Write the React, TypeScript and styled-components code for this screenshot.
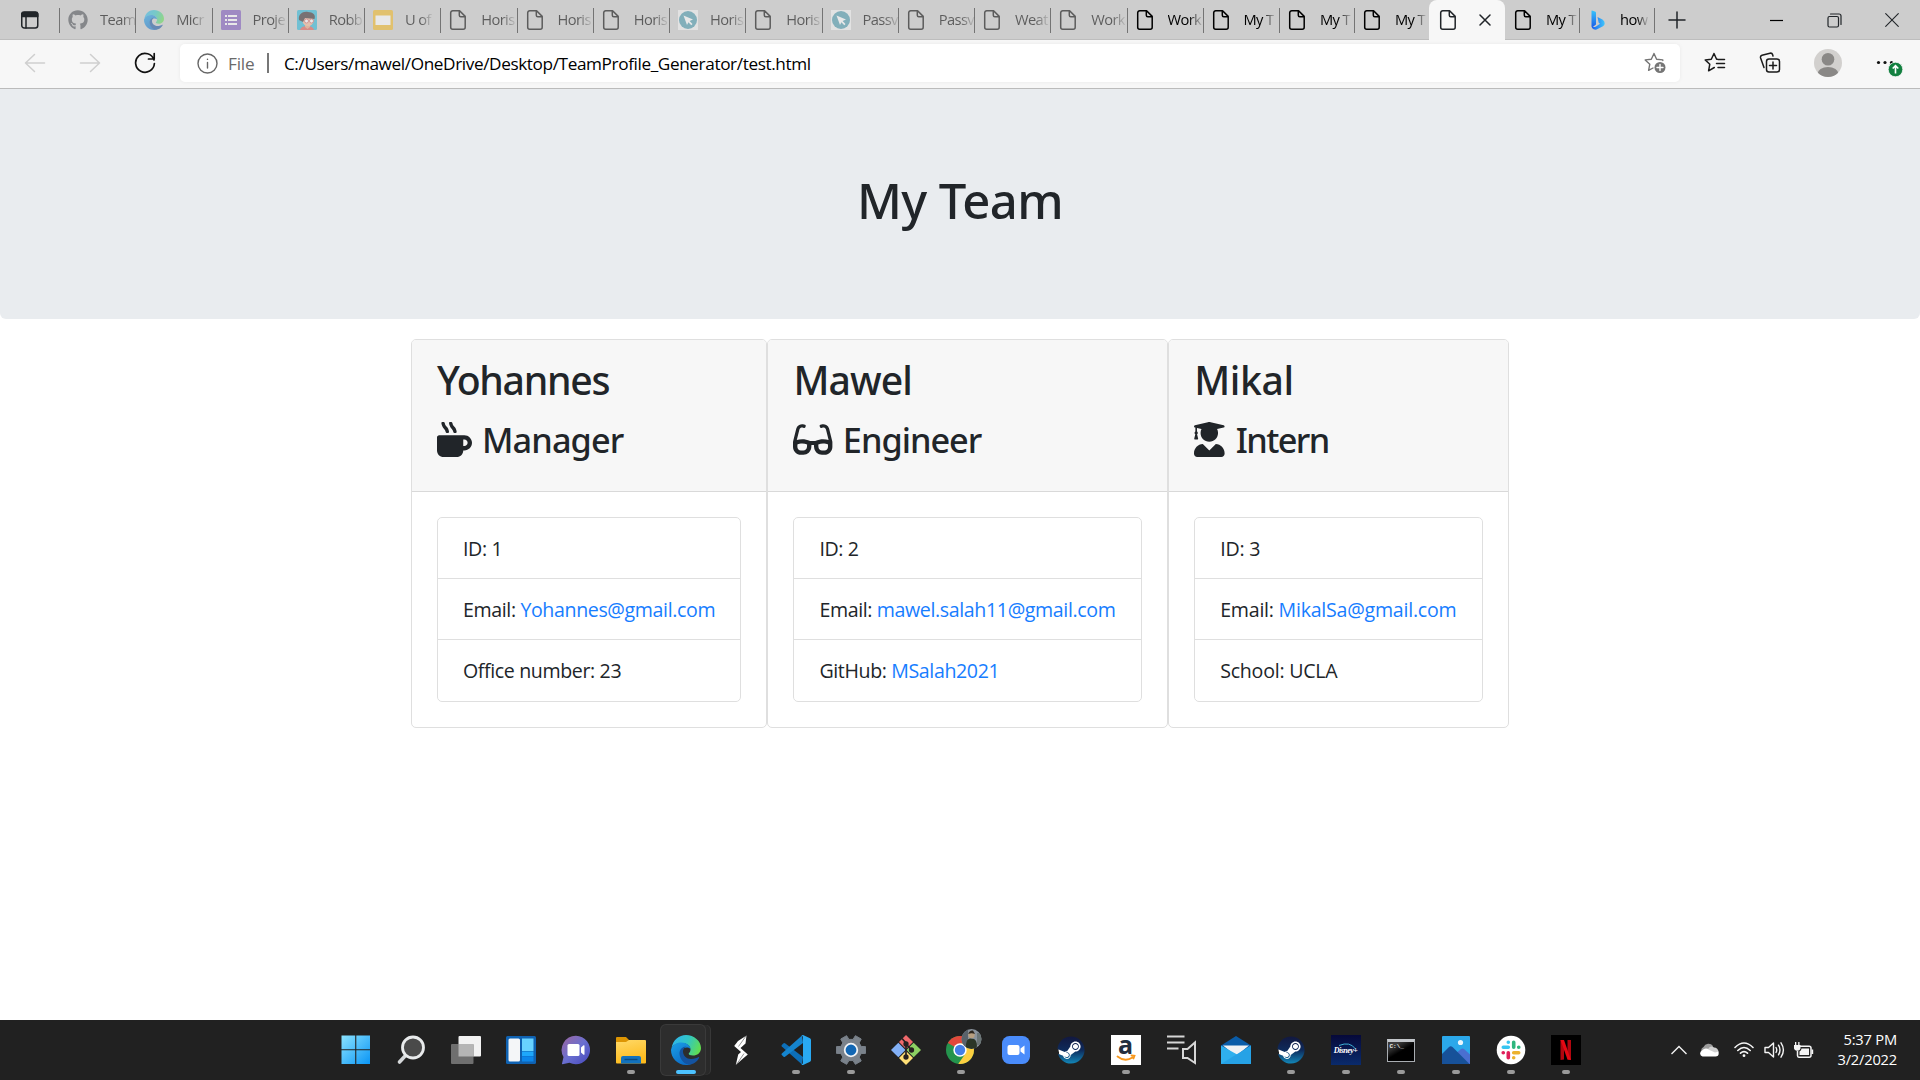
import React from "react";
import styled, { createGlobalStyle, css } from "styled-components";
import { FaGithub, FaMugHot, FaGlasses, FaUserGraduate, FaSteam } from "react-icons/fa";

const GlobalStyle = createGlobalStyle`
  * { box-sizing: border-box; }
  body {
    margin: 0;
    background: #fff;
    color: #212529;
    font-family: "Open Sans", "Noto Sans", sans-serif;
    overflow: hidden;
  }
  h1, h2, h3, ul { margin: 0; padding: 0; }
  svg { display: block; flex: none; }
`;

const Screen = styled.div`
  width: 1920px;
  height: 1080px;
  display: flex;
  flex-direction: column;
`;

/* ---------- browser chrome ---------- */

const TabStrip = styled.div`
  height: 40px;
  flex: none;
  display: flex;
  background: #cdcdcd;
  box-shadow: inset 0 -1px 0 #bdbdbd;
`;

const TabMenuButton = styled.div`
  width: 59px;
  flex: none;
  display: flex;
  align-items: center;
  padding-left: 20px;
`;

const TabItem = styled.div<{ $w: number; $asleep?: boolean; $bare?: boolean }>`
  width: ${(p) => p.$w}px;
  flex: none;
  display: flex;
  align-items: center;
  color: #000;
  &::before {
    content: "";
    flex: none;
    width: 1px;
    height: 25px;
    margin-right: 8px;
    background: ${(p) => (p.$bare ? "transparent" : "#747474")};
  }
  > * { opacity: ${(p) => (p.$asleep ? 0.55 : 1)}; }
`;

const TabTitle = styled.span`
  flex: none;
  margin: -2px 0 0 12px;
  padding-right: 1px;
  white-space: nowrap;
  font-size: 14.7px;
  line-height: 22px;
  letter-spacing: -0.6px;
  mask-image: linear-gradient(90deg, #000 60%, rgba(0, 0, 0, 0.15) 98%);
`;

const ActiveTab = styled.div`
  width: 76px;
  flex: none;
  display: flex;
  align-items: center;
  gap: 20px;
  padding-left: 10px;
  background: #f7f7f7;
  border-radius: 8px 8px 0 0;
`;

const EndDivider = styled.div`
  width: 1px;
  height: 25px;
  align-self: center;
  margin-right: 13px;
  background: #747474;
`;

const NewTab = styled.div`
  display: flex;
  align-items: center;
`;

const WindowButtons = styled.div`
  margin-left: auto;
  width: 151px;
  display: flex;
  align-items: center;
  gap: 43px;
`;

const Toolbar = styled.div`
  height: 49px;
  flex: none;
  display: flex;
  align-items: center;
  padding: 0 17px 2px 24px;
  background: #f7f7f7;
  border-bottom: 1px solid #bbb;
`;

const NavButtons = styled.div`
  width: 156px;
  flex: none;
  display: flex;
  align-items: center;
  gap: 33px;
`;

const AddressBar = styled.div`
  width: 1500px;
  height: 38px;
  flex: none;
  display: flex;
  align-items: center;
  padding: 0 13px 0 17px;
  border-radius: 5px;
  background: #fff;
  box-shadow: 0 0 4px rgba(0, 0, 0, 0.06);
  font-size: 17.2px;
  letter-spacing: -0.39px;
  color: #000;
`;

const Scheme = styled.span`
  margin-left: 10px;
  color: #6a6a6a;
  letter-spacing: -0.2px;
`;

const Divider = styled.span`
  width: 1.5px;
  height: 20px;
  margin: 0 15px 0 13px;
  background: #777;
`;

const Address = styled.span`
  flex: 1;
`;

const ToolbarActions = styled.div`
  display: flex;
  align-items: center;
  margin-left: 24px;
`;

const Action = styled.div<{ $gap: number }>`
  margin-right: ${(p) => p.$gap}px;
`;

/* ---------- page ---------- */

const Page = styled.main`
  flex: 1;
  display: flex;
  flex-direction: column;
  align-items: center;
`;

const Jumbotron = styled.header`
  width: 100%;
  height: 230px;
  padding-top: 82px;
  margin-bottom: 20px;
  background: #e9ecef;
  border-radius: 0 0 6px 6px;
  text-align: center;
`;

const headingFont = css<{ $track: number }>`
  font-family: "Noto Sans", "Open Sans", sans-serif;
  font-weight: 500;
  line-height: 1.2;
  letter-spacing: ${(p) => p.$track}px;
`;

const PageTitle = styled.h1<{ $track: number }>`
  ${headingFont}
  font-size: 49px;
`;

const Team = styled.section`
  display: flex;
`;

const Card = styled.article<{ $w: number }>`
  width: ${(p) => p.$w}px;
  height: 389px;
  border: 1px solid #dfdfdf;
  border-radius: 5px;
  overflow: hidden;
`;

const CardHeader = styled.div`
  height: 152px;
  padding: 16px 25px;
  background: #f7f7f7;
  border-bottom: 1px solid #d9d9d9;
`;

const MemberName = styled.h2<{ $track: number }>`
  ${headingFont}
  font-size: 39.2px;
  line-height: 48px;
  margin-bottom: 15px;
`;

const MemberRole = styled.h3<{ $track: number; $gap: number; $iconWidth: number }>`
  ${headingFont}
  display: flex;
  align-items: center;
  gap: ${(p) => p.$gap}px;
  font-size: 34.3px;
  line-height: 42px;
  svg {
    width: ${(p) => p.$iconWidth}px;
    height: 35px;
    margin-top: -2px;
  }
`;

const Facts = styled.ul<{ $track: number }>`
  margin: 25px;
  list-style: none;
  border: 1px solid #dfdfdf;
  border-radius: 5px;
  letter-spacing: ${(p) => p.$track}px;
`;

const Fact = styled.li`
  height: 61px;
  padding: 16px 25px 0;
  font-size: 19.6px;
  line-height: 30px;
  white-space: nowrap;
  &:first-child { height: 60px; }
  &:last-child { height: 62px; }
  & + & { border-top: 1px solid #dfdfdf; }
`;

const Link = styled.a`
  color: #177dff;
`;

/* ---------- taskbar ---------- */

const Taskbar = styled.footer`
  height: 60px;
  flex: none;
  display: flex;
  align-items: center;
  padding-left: 328px;
  background: #212121;
  color: #fff;
`;

const AppSlot = styled.div<{ $state?: "open" | "active" }>`
  width: 55px;
  height: 60px;
  flex: none;
  display: flex;
  flex-direction: column;
  align-items: center;
  justify-content: flex-end;
  &::after {
    content: "";
    flex: none;
    width: ${(p) => (p.$state === "active" ? 20 : 8)}px;
    height: 4px;
    margin: ${(p) => (p.$state === "active" ? -5 : 5)}px 0 6px;
    border-radius: 2px;
    background: ${(p) => (p.$state === "active" ? "#4cc2ff" : p.$state ? "#9a9a9a" : "transparent")};
  }
`;

const IconBox = styled.div`
  display: flex;
  align-items: center;
  justify-content: center;
  width: 30px;
  height: 30px;
`;

const ActiveIconBox = styled(IconBox)`
  width: 44px;
  height: 50px;
  flex: none;
  margin-right: 5px;
  padding-left: 5px;
  border-radius: 5px;
  background: #2d2d2d;
  box-shadow: 0 0 0 1px #3a3a3a, 5px 0 0 0 #292929, 6px 0 0 0 #383838;
`;

const Tray = styled.div`
  margin-left: auto;
  display: flex;
  align-items: center;
`;

const TrayItem = styled.div<{ $gap: number }>`
  margin-right: ${(p) => p.$gap}px;
`;

const Clock = styled.div`
  width: 82px;
  margin-right: 23px;
  margin-left: -1px;
  font-size: 14.7px;
  line-height: 20px;
  letter-spacing: -0.2px;
  text-align: right;
  padding-bottom: 3px;
`;

/* ---------- browser icons ---------- */

const stroke = { fill: "none", stroke: "currentColor", strokeLinecap: "round", strokeLinejoin: "round" } as const;

const PageIcon = () => (
  <svg width="20" height="20" viewBox="0 0 20 20" {...stroke} strokeWidth="1.5">
    <path d="M4.5.8H10.6L16.2 6.4V17.2a2 2 0 0 1-2 2H3.7a2 2 0 0 1-2-2V2.8a2 2 0 0 1 2-2ZM10.3 1V5.2a1.5 1.5 0 0 0 1.5 1.5H16" />
  </svg>
);

const CursorIcon = () => (
  <svg width="20" height="20" viewBox="0 0 20 20">
    <rect width="20" height="20" fill="#f4f4f4" />
    <circle cx="10" cy="10" r="9" fill="#4597ac" />
    <path d="M5.5 5.5 15 9.5 11.6 11 14.5 14 13.3 15.2 10.4 12.2 9 15Z" fill="#fff" />
  </svg>
);

const FormsIcon = () => (
  <svg width="20" height="20" viewBox="0 0 20 20">
    <rect width="20" height="20" rx="1.5" fill="#7b54bb" />
    <g fill="#fff">
      <path d="M7 5h9v2H7zM7 9h9v2H7zM7 13h9v2H7z" />
      <path d="M4 5h2v2H4zM4 9h2v2H4zM4 13h2v2H4z" />
    </g>
  </svg>
);

const SlidesIcon = () => (
  <svg width="20" height="20" viewBox="0 0 20 20">
    <rect width="20" height="20" rx="1.5" fill="#f2b822" />
    <rect x="2.5" y="5.5" width="15" height="9.5" fill="#fff" />
  </svg>
);

const FaceIcon = () => (
  <svg width="20" height="20" viewBox="0 0 20 20">
    <rect width="20" height="20" rx="1.5" fill="#26b6d8" />
    <path d="M3 20q1-4 7-4t7 4Z" fill="#e1574e" />
    <path d="M8 14h5v3l-2.5 2L8 17Z" fill="#e9a37e" />
    <circle cx="11" cy="10.5" r="5.5" fill="#f4b896" />
    <path d="M2 10C1 4 6 1 11 2c5 0 8 3 6.5 7L8 8l-2 4Z" fill="#33292b" />
    <g fill="#fff" stroke="#d05252" strokeWidth=".8">
      <circle cx="9.5" cy="11" r="2" />
      <circle cx="14.5" cy="11" r="2" />
    </g>
  </svg>
);

const BingIcon = () => (
  <svg width="20" height="20" viewBox="0 0 20 20">
    <defs>
      <linearGradient id="bingStem" x2="0" y2="1">
        <stop stopColor="#36c5fb" />
        <stop offset="1" stopColor="#1a5be8" />
      </linearGradient>
      <linearGradient id="bingBowl">
        <stop stopColor="#1b5ff0" />
        <stop offset="1" stopColor="#3fc6fb" />
      </linearGradient>
    </defs>
    <path d="M4 .5 7.5 1.8Q8 2 8 3V14.5L4 17.5 3.5 16V1Q3.5.3 4 .5Z" fill="url(#bingStem)" />
    <path d="M9.5 7 14.5 9.5Q16.7 11 16.7 13.2 16.7 15 15 16.2L8.6 19.6Q6 20.3 4 18L3.7 15.8Q5.5 18 8 16.5L12 13.8 10.7 12.8Z" fill="url(#bingBowl)" />
  </svg>
);

const EdgeIcon = ({ size, id }: { size: number; id: string }) => (
  <svg width={size} height={size} viewBox="0 0 30 30">
    <defs>
      <linearGradient id={`${id}Top`} x1="0" y1=".3" x2="1" y2=".6">
        <stop stopColor="#2fb4ee" />
        <stop offset=".5" stopColor="#31c6c4" />
        <stop offset="1" stopColor="#62de4d" />
      </linearGradient>
      <linearGradient id={`${id}Left`} x2=".6" y2="1">
        <stop stopColor="#1ba0e8" />
        <stop offset="1" stopColor="#0c6cc6" />
      </linearGradient>
    </defs>
    <path d="M.5 13C2 5 8 0 15 0c8 0 15 6 15 13 0 5-4 7.5-8 7.5-3 0-4.5-1-4.3-2 .8-1 1.8-2 1.8-4C19.5 11 16 8 11 8 6 8 2 10 .5 13Z" fill={`url(#${id}Top)`} />
    <path d="M.6 13C2 9.5 6 7.5 10.5 7.5c5 0 9 3 9 6.5C15 10.5 9 14 9.5 20c.5 5 5.5 9.5 10.5 9.2C18.5 29.8 17 30 15 30 6.5 30 0 23 0 15 0 14.2.3 13.5.6 13Z" fill={`url(#${id}Left)`} />
    <path d="M8.5 19C8.2 14.5 11.5 11.5 15.5 11.5c-2.5 1-3.5 3-3.5 5 0 4 3.5 7.5 8 7.5 3.5 0 6-1.2 7.5-2 .6 0 1 .3.5 1-2 4-6 6.5-9.5 6.5-5 0-9.5-5-10-10.5Z" fill="#1453a0" />
  </svg>
);

const TabMenuIcon = () => (
  <svg width="20" height="20" viewBox="0 0 20 20" {...stroke} strokeWidth="1.5">
    <rect x="1.75" y="2.5" width="16" height="15.5" rx="2.5" />
    <path d="M1.75 3.5Q2 2 4 2H15.5Q17.5 2 17.75 3.5V6.5h-16Z" fill="currentColor" />
    <path d="M6 6.5V18" />
  </svg>
);

const ArrowIcon = ({ flip }: { flip?: boolean }) => (
  <svg width="22" height="20" viewBox="0 0 22 20" {...stroke} stroke="#cfcfcf" strokeWidth="1.5">
    <path d={flip ? "M1.5 10H20.5M11.5 1.5 20.5 10 11.5 18.5" : "M20.5 10H1.5M10.5 1.5 1.5 10 10.5 18.5"} />
  </svg>
);

const ReloadIcon = () => (
  <svg width="22" height="22" viewBox="0 0 22 22" {...stroke} stroke="#111" strokeWidth="1.7">
    <path d="M20 8A9.4 9.4 0 1 0 20.4 11.5M20.2 1.5V7H14.5" />
  </svg>
);

const InfoIcon = () => (
  <svg width="21" height="21" viewBox="0 0 21 21" {...stroke} stroke="#666" strokeWidth="1.4">
    <circle cx="10.5" cy="10.5" r="9.5" />
    <path d="M10.5 9.5V15M10.5 6.3V6.4" />
  </svg>
);

const AddFavoriteIcon = () => (
  <svg width="23" height="22" viewBox="0 0 23 22" {...stroke} stroke="#757575" strokeWidth="1.4">
    <path d="M18.8 8.5V7.9L12.6 7.2 10 1.5 7.3 7.2 1.2 7.9 5.8 12.2 4.6 18.3 9 16" />
    <circle cx="16" cy="15.5" r="5.5" fill="#757575" stroke="none" />
    <path d="M16 12.5V18.5M13 15.5H19" stroke="#fff" />
  </svg>
);

const FavoritesIcon = () => (
  <svg width="22" height="22" viewBox="0 0 22 22" {...stroke} stroke="#1b1b1b" strokeWidth="1.5">
    <path d="M13.5 7.2H12.6L10 1.5 7.3 7.2 1.2 7.9 5.8 12.2 4.6 18.8 10.3 15.5M14 7.5H20.5M12.5 11.5H20.5M14 15.5H20.5" />
  </svg>
);

const CollectionsIcon = () => (
  <svg width="22" height="22" viewBox="0 0 22 22" {...stroke} stroke="#1b1b1b" strokeWidth="1.5">
    <rect x="7.5" y="7" width="13" height="13" rx="2.5" />
    <path d="M14 10V17M10.5 13.5H17.5M5 15.5 1.6 6Q1 4 3 3.2L11 1.2Q13 .8 13.6 2.6L14 4" />
  </svg>
);

const ProfileIcon = () => (
  <svg width="28" height="28" viewBox="0 0 28 28">
    <defs>
      <clipPath id="profileClip"><circle cx="14" cy="14" r="14" /></clipPath>
    </defs>
    <g clipPath="url(#profileClip)">
      <rect width="28" height="28" fill="#d2d0ce" />
      <circle cx="14" cy="10.3" r="6.3" fill="#8a8886" />
      <ellipse cx="14" cy="25" rx="10.5" ry="7" fill="#8a8886" />
    </g>
  </svg>
);

const MoreIcon = () => (
  <svg width="27" height="28" viewBox="0 0 27 28">
    <g fill="#111">
      <circle cx="2.5" cy="13.5" r="1.6" />
      <circle cx="9" cy="13.5" r="1.6" />
      <circle cx="15.5" cy="13.5" r="1.6" />
    </g>
    <circle cx="19.5" cy="20.5" r="7.3" fill="#138040" stroke="#f7f7f7" strokeWidth=".8" />
    <path d="M19.5 24.5V17M16.7 19.5 19.5 16.7 22.3 19.5" fill="none" stroke="#fff" strokeWidth="1.6" />
  </svg>
);

/* ---------- taskbar icons ---------- */

const WindowsIcon = () => (
  <svg width="30" height="30" viewBox="0 0 30 30">
    <defs>
      <linearGradient id="win" x1="0" y1="0" x2="1" y2="1">
        <stop stopColor="#8be3ff" />
        <stop offset="1" stopColor="#0a95f5" />
      </linearGradient>
    </defs>
    <path d="M.5.5H14.2V14.2H.5ZM15.3.5H29V14.2H15.3ZM.5 15.3H14.2V29H.5ZM15.3 15.3H29V29H15.3Z" fill="url(#win)" />
  </svg>
);

const SearchIcon = () => (
  <svg width="30" height="30" viewBox="0 0 30 30" fill="none" strokeLinecap="round">
    <path d="M10.5 19.5 3.5 27" stroke="#d5d8da" strokeWidth="3.6" />
    <circle cx="17" cy="12.5" r="10.5" fill="#4a4a4a" stroke="#e9ebec" strokeWidth="2.8" />
  </svg>
);

const TaskViewIcon = () => (
  <svg width="30" height="30" viewBox="0 0 30 30">
    <rect x="7.5" y="1" width="22.5" height="20.5" rx="1" fill="#f2f2f2" />
    <rect x="0" y="9" width="22.5" height="20" rx="1" fill="#6f6f6f" />
    <path d="M7.5 9H22.5V21.5H7.5Z" fill="#b5b5b5" />
  </svg>
);

const WidgetsIcon = () => (
  <svg width="30" height="30" viewBox="0 0 30 30">
    <rect y="1" width="30" height="28" rx="1.5" fill="#0f62b2" />
    <rect x="2.5" y="3.5" width="11.5" height="23" rx="1.5" fill="#f4f6f8" />
    <path d="M16 3.5H27.5V16H16Z" fill="#68d3ff" />
    <path d="M16 16.5H27.5V21H16Z" fill="#1ea8fb" />
    <path d="M16 21.3H27.5V26.5H16Z" fill="#0c86ea" />
  </svg>
);

const ChatIcon = () => (
  <svg width="30" height="30" viewBox="0 0 30 30">
    <defs>
      <linearGradient id="chat" x1="0" y1=".2" x2=".8" y2="1">
        <stop stopColor="#9467a8" />
        <stop offset=".5" stopColor="#6a6fd0" />
        <stop offset="1" stopColor="#4d4fc0" />
      </linearGradient>
    </defs>
    <path d="M15 .8A14.2 14.2 0 1 1 8.5 27.7L1.5 29.2Q.8 29.2 1 28.5L2.5 22A14.2 14.2 0 0 1 15 .8Z" fill="url(#chat)" />
    <rect x="6.5" y="9" width="12" height="12" rx="1.5" fill="#fff" />
    <path d="M20 12.5 22.5 10.3Q23.5 9.8 23.5 11V19Q23.5 20.2 22.5 19.7L20 17.5Z" fill="#fff" />
  </svg>
);

const FolderIcon = () => (
  <svg width="30" height="30" viewBox="0 0 30 30">
    <defs>
      <linearGradient id="folder" x2=".3" y2="1">
        <stop stopColor="#ffd968" />
        <stop offset="1" stopColor="#fdbb1d" />
      </linearGradient>
    </defs>
    <path d="M0 3Q0 2 1 2H10L13 5V12H0Z" fill="#dd9503" />
    <path d="M0 7H10L13 5H29Q30 5 30 6V27.5Q30 28.5 29 28.5H1Q0 28.5 0 27.5Z" fill="url(#folder)" />
    <path d="M5 28.5V23Q5 21 7 21H23Q25 21 25 23V28.5Z" fill="#1272bd" />
    <path d="M8.5 24.5H21.5" stroke="#0a4a80" strokeWidth="1.4" />
  </svg>
);

const BoltIcon = () => (
  <svg width="30" height="30" viewBox="0 0 30 30" fill="#fff">
    <path d="M20.5.5 19.5 8.5 14.5 13 21.8 19.5 16.5 24 9.8 30 12.2 19.5 15 17 8.200 11 12 6Z" />
    <path d="M20 1 12.5 11.5M10.5 29.5 18 18.5" stroke="#212121" strokeWidth=".5" />
  </svg>
);

const CodeIcon = () => (
  <svg width="30" height="30" viewBox="0 0 30 30">
    <path d="M22 22 4 8.2Q3.3 7.7 2.6 8.2L.8 9.9Q.1 10.7.8 11.5L21 29.6Z" fill="#0d6fb8" />
    <path d="M22 8 4 21.8Q3.3 22.3 2.6 21.8L.8 20.1Q.1 19.3.8 18.5L21 .4Z" fill="#1585cf" />
    <path d="M22 0 29 3.3Q30 3.8 30 5V25Q30 26.2 29 26.7L22 30Q21 30 20.5 29.5 22 29 22 27.5V2.5Q22 1 20.5.5 21 0 22 0Z" fill="#29a9f2" />
  </svg>
);

const gearPath = (() => {
  const pts: string[] = [];
  for (let i = 0; i < 6; i++) {
    const base = i * 60;
    for (const [offset, radius] of [[-19, 10.8], [-13, 15], [13, 15], [19, 10.8]]) {
      const a = ((base + offset) * Math.PI) / 180;
      pts.push(`${(15 + radius * Math.cos(a)).toFixed(2)} ${(15 + radius * Math.sin(a)).toFixed(2)}`);
    }
  }
  return `M${pts.join("L")}Z`;
})();

const SettingsIcon = () => (
  <svg width="30" height="30" viewBox="0 0 30 30">
    <path d={gearPath} fill="#7a828b" stroke="#7a828b" strokeWidth="1" strokeLinejoin="round" />
    <circle cx="15" cy="15" r="6.3" fill="#1267b4" stroke="#f1f3f5" strokeWidth="1.8" />
  </svg>
);

const GitIcon = () => (
  <svg width="30" height="30" viewBox="0 0 30 30">
    <path d="M15 0 22 7 15 14 8 7Z" fill="#f0696c" />
    <path d="M7.3 7.7 14.5 15 7.3 22.3 0 15Z" fill="#83b0f6" />
    <path d="M22.7 7.7 30 15 22.7 22.3 15.5 15Z" fill="#8dd062" />
    <path d="M15 16 22 23 15 30 8 23Z" fill="#ffdf76" />
    <g stroke="#262020" strokeWidth="1.7" fill="#262020">
      <path d="M11 3.5 15 8V22M15 9 20 14.5" fill="none" />
      <circle cx="15" cy="9" r="1.8" />
      <circle cx="20.5" cy="15" r="1.8" />
      <circle cx="15" cy="22" r="1.8" />
    </g>
  </svg>
);

const ChromeIcon = () => (
  <svg width="36" height="42" viewBox="0 0 36 42" overflow="visible">
    <defs>
      <clipPath id="chromeClip"><circle cx="17" cy="21" r="14" /></clipPath>
      <clipPath id="avatarClip"><circle cx="28.5" cy="10" r="10" /></clipPath>
    </defs>
    <g clipPath="url(#chromeClip)">
      <rect width="36" height="36" fill="#24944d" />
      <path d="M17 21 4.9 14 2 4H36V14.5H17Z" fill="#e2483b" />
      <path d="M17 14.5H36V36H14.5L22.5 24.5Z" fill="#fdcf40" />
    </g>
    <circle cx="17" cy="21" r="6.7" fill="#fff" />
    <circle cx="17" cy="21" r="5.2" fill="#447fe8" />
    <g clipPath="url(#avatarClip)">
      <rect x="18" width="22" height="21" fill="#8a939c" />
      <path d="M18 0h7v21h-7Z" fill="#59626b" />
      <path d="M34 4h6v12h-6Z" fill="#6b7576" />
      <circle cx="28.5" cy="6" r="3.2" fill="#b89f80" />
      <path d="M25.2 5Q26.500 1 30 1.5L32 5Q28.500 3.500 25.200 5Z" fill="#2d261d" />
      <path d="M23 20Q22.500 10 27 9.500L31 10Q35 12 33.500 21Z" fill="#2b3627" />
    </g>
  </svg>
);

const ZoomIcon = () => (
  <svg width="30" height="30" viewBox="0 0 30 30">
    <rect x="1" y="1" width="28" height="28" rx="7.5" fill="#4a8cfb" />
    <rect x="6.5" y="10" width="12" height="10" rx="2" fill="#fff" />
    <path d="M19.5 13.5 23.5 10.5V19.5L19.5 16.5Z" fill="#fff" />
  </svg>
);

const SteamFrame = styled.div`
  width: 28px;
  height: 28px;
  border-radius: 50%;
  background: radial-gradient(circle, #fff 62%, transparent 64%);
`;

const SteamIcon = () => (
  <SteamFrame>
    <svg width="28" height="28" viewBox="0 0 28 28">
      <defs>
        <linearGradient id="steam" x2="0" y2="1">
          <stop stopColor="#12183f" />
          <stop offset=".5" stopColor="#0e2a5a" />
          <stop offset="1" stopColor="#1387b8" />
        </linearGradient>
      </defs>
      <FaSteam size={28} fill="url(#steam)" />
    </svg>
  </SteamFrame>
);

const AmazonTile = styled.div`
  width: 30px;
  height: 30px;
  display: flex;
  flex-direction: column;
  align-items: center;
  background: #fff;
  color: #232f3e;
  font-size: 25px;
  font-weight: 700;
  line-height: 18px;
  svg { margin-top: 1px; }
`;

const AmazonIcon = () => (
  <AmazonTile>
    a
    <svg width="20" height="8" viewBox="0 0 20 8" fill="none" stroke="#f7981d" strokeWidth="1.8" strokeLinecap="round">
      <path d="M1.5 2.5Q9 8.5 16.5 3.5M15.5 1.5 18.5 1.8 17.5 4.5" />
    </svg>
  </AmazonTile>
);

const ReadAloudIcon = () => (
  <svg width="30" height="30" viewBox="0 0 30 30" fill="none" stroke="#d6d6d6" strokeWidth="2">
    <path d="M1 1.5H18.5M1 7.5H18.5M1 13.5H12.5" />
    <path d="M17 14H21.5L29 7.5V28L21.5 23H17Z" />
  </svg>
);

const MailIcon = () => (
  <svg width="30" height="30" viewBox="0 0 30 30">
    <path d="M0 10.5 15 1 30 10.5V20H0Z" fill="#0a5ca8" />
    <path d="M2 10.5H28L15 21Z" fill="#f0f2f4" />
    <path d="M0 10.5 17 20 30 29H0Z" fill="#2fb0ee" />
    <path d="M30 10.5V29H0L15 20Z" fill="#35b8f5" />
    <path d="M0 29 30 10.5V29Z" fill="#1c93dc" opacity=".6" />
  </svg>
);

const DisneyTile = styled.div`
  width: 30px;
  height: 30px;
  display: flex;
  flex-direction: column;
  align-items: center;
  background: linear-gradient(#06093a, #0a2b6c);
  color: #fff;
  font-family: "Liberation Serif", serif;
  font-size: 8px;
  font-style: italic;
  font-weight: 700;
  line-height: 8px;
  letter-spacing: -0.5px;
  svg { margin: 7px 0 -3px; }
`;

const DisneyIcon = () => (
  <DisneyTile>
    <svg width="22" height="8" viewBox="0 0 22 8" fill="none" stroke="#3fb3d8" strokeWidth="1">
      <path d="M4 3.5Q15-1 20.5 7" />
    </svg>
    Disney+
  </DisneyTile>
);

const TerminalTile = styled.div`
  width: 28px;
  height: 23px;
  padding: 1px 2px;
  border: 1px solid #a9adb2;
  border-top: 3px solid #c3c7cb;
  background: linear-gradient(150deg, #3c3c3c 20%, #000 50%);
  color: #eee;
  font: 700 6px/8px "Liberation Mono", monospace;
`;

const PhotosIcon = () => (
  <svg width="30" height="30" viewBox="0 0 30 30">
    <rect x="1" y="1" width="28" height="28" rx="1" fill="#2ba8ea" />
    <path d="M16 17.5 20 14Q21.5 13 23 14L29 19.5V29H16Z" fill="#4a6fd0" />
    <path d="M1 19 8 12Q9.5 10.5 11.5 12L28.5 29H1Z" fill="#175199" />
    <circle cx="19.5" cy="7.5" r="2.6" fill="#eaf6fd" />
  </svg>
);

const SlackIcon = () => (
  <svg width="30" height="30" viewBox="0 0 30 30" strokeWidth="3.6" strokeLinecap="round">
    <circle cx="15" cy="15" r="14.3" fill="#fff" />
    <path stroke="#36c5f0" d="M7.3 12.3H12.3M12.3 7.2V7.3" />
    <path stroke="#2eb67d" d="M17.7 7.3V12.3M22.7 12.3H22.8" />
    <path stroke="#ecb22e" d="M17.7 17.7H22.7M17.7 22.7V22.8" />
    <path stroke="#e01e5a" d="M12.3 17.7V22.7M7.2 17.7H7.3" />
  </svg>
);

const NetflixIcon = () => (
  <svg width="30" height="30" viewBox="0 0 30 30">
    <rect width="30" height="30" fill="#000" />
    <path d="M9.5 5H13V24.5L9.5 25ZM16.5 5H20V25L16.5 24.5Z" fill="#b1060f" />
    <path d="M9.5 5H13L20 25 16.5 24.5Z" fill="#e50914" />
  </svg>
);

const ChevronUpIcon = () => (
  <svg width="18" height="10" viewBox="0 0 18 10" fill="none" stroke="#f2f2f2" strokeWidth="1.4">
    <path d="M1.5 9 9 1.5 16.5 9" />
  </svg>
);

const CloudIcon = () => (
  <svg width="20" height="14" viewBox="0 0 20 14">
    <path d="M4 11A4 4 0 0 1 4.5 4 5.5 5.5 0 0 1 14 3L12 9Z" fill="#9b9b9b" />
    <path d="M9 6Q12 2 15 4.5A4.5 4.5 0 0 1 19.5 9L14 11Z" fill="#d0d0d0" />
    <path d="M3.5 13.5A3.2 3.2 0 0 1 3 7.5Q6.5 4 10.5 7L16 9.5 19.5 8.5Q20.5 13.5 16.5 13.5Z" fill="#fff" />
  </svg>
);

const WifiIcon = () => (
  <svg width="20" height="16" viewBox="0 0 20 16" fill="none" stroke="#f5f5f5" strokeWidth="1.6" strokeLinecap="round">
    <path d="M1 5.5Q10-3.5 19 5.5M3.8 8.5Q10 2.5 16.2 8.5M6.5 11.2Q10 8 13.5 11.2" />
    <circle cx="10" cy="13.7" r="1.4" fill="#f5f5f5" stroke="none" />
  </svg>
);

const SpeakerIcon = () => (
  <svg width="21" height="18" viewBox="0 0 21 18" fill="none" stroke="#f5f5f5" strokeWidth="1.4" strokeLinecap="round" strokeLinejoin="round">
    <path d="M1 6.5H4.5L9.5 2V16L4.5 11.5H1ZM12 6.5Q13.5 9 12 11.5M14.5 4.2Q17.5 9 14.5 13.8M17 1.8Q21.8 9 17 16.2" />
  </svg>
);

const BatteryIcon = () => (
  <svg width="20" height="17" viewBox="0 0 20 17">
    <path d="M6 4.2H15.2Q17 4.2 17 6V13.5Q17 15.2 15.2 15.2H4.8Q3.5 15.2 3.5 13.5V9" fill="none" stroke="#f5f5f5" strokeWidth="1.5" />
    <path d="M7.5 6.5H15V13H5.5V9.5Q7.5 8.5 7.5 6.5ZM17.5 7.5H19.2V12H17.5ZM0 3H6.5V6.5Q6 8.5 4 8.8H2.5Q.5 8.5 0 6.5ZM1 0H2.3V3H1ZM4.2 0H5.5V3H4.2Z" fill="#f5f5f5" />
  </svg>
);

/* ---------- data ---------- */

type TabData = { title: string; icon: React.ReactNode; asleep?: boolean; w?: number };

const sleepingTabs: TabData[] = [
  { title: "Team", icon: <FaGithub size={20} color="#4b4f55" /> },
  { title: "Micr", icon: <EdgeIcon size={20} id="edgeTab" /> },
  { title: "Proje", icon: <FormsIcon /> },
  { title: "Robb", icon: <FaceIcon /> },
  { title: "U of", icon: <SlidesIcon /> },
  { title: "Horis", icon: <PageIcon /> },
  { title: "Horis", icon: <PageIcon /> },
  { title: "Horis", icon: <PageIcon /> },
  { title: "Horis", icon: <CursorIcon /> },
  { title: "Horis", icon: <PageIcon /> },
  { title: "Passv", icon: <CursorIcon /> },
  { title: "Passv", icon: <PageIcon /> },
  { title: "Weat", icon: <PageIcon /> },
  { title: "Work", icon: <PageIcon /> },
];

const awakeTabs: TabData[] = [
  { title: "Work", icon: <PageIcon />, w: 76 },
  { title: "My T", icon: <PageIcon />, w: 76.5 },
  { title: "My T", icon: <PageIcon />, w: 75 },
  { title: "My T", icon: <PageIcon />, w: 75 },
];

const team = [
  {
    name: "Yohannes", nameTrack: -1.3, role: "Manager", roleTrack: -0.9, gap: 10, iconWidth: 35, width: 356.4,
    icon: <FaMugHot />, track: -0.38,
    facts: [["ID: 1", ""], ["Email: ", "Yohannes@gmail.com"], ["Office number: 23", ""]],
  },
  {
    name: "Mawel", nameTrack: -0.9, role: "Engineer", roleTrack: -1, gap: 10, iconWidth: 39.4, width: 400.8,
    icon: <FaGlasses />, track: -0.38,
    facts: [["ID: 2", ""], ["Email: ", "mawel.salah11@gmail.com"], ["GitHub: ", "MSalah2021"]],
  },
  {
    name: "Mikal", nameTrack: -0.4, role: "Intern", roleTrack: -1.6, gap: 11, iconWidth: 30.6, width: 340.8,
    icon: <FaUserGraduate />, track: -0.24,
    facts: [["ID: 3", ""], ["Email: ", "MikalSa@gmail.com"], ["School: UCLA", ""]],
  },
];

const apps: { icon: React.ReactNode; state?: "open" | "active" }[] = [
  { icon: <WindowsIcon /> },
  { icon: <SearchIcon /> },
  { icon: <TaskViewIcon /> },
  { icon: <WidgetsIcon /> },
  { icon: <ChatIcon /> },
  { icon: <FolderIcon />, state: "open" },
  { icon: <EdgeIcon size={30} id="edgeTask" />, state: "active" },
  { icon: <BoltIcon /> },
  { icon: <CodeIcon />, state: "open" },
  { icon: <SettingsIcon />, state: "open" },
  { icon: <GitIcon /> },
  { icon: <ChromeIcon />, state: "open" },
  { icon: <ZoomIcon /> },
  { icon: <SteamIcon /> },
  { icon: <AmazonIcon />, state: "open" },
  { icon: <ReadAloudIcon /> },
  { icon: <MailIcon /> },
  { icon: <SteamIcon />, state: "open" },
  { icon: <DisneyIcon />, state: "open" },
  { icon: <TerminalTile>C:\_</TerminalTile>, state: "open" },
  { icon: <PhotosIcon />, state: "open" },
  { icon: <SlackIcon />, state: "open" },
  { icon: <NetflixIcon />, state: "open" },
];

const Tab = ({ tab, bare }: { tab: TabData; bare?: boolean }) => (
  <TabItem $w={tab.w ?? 76.25} $asleep={tab.asleep} $bare={bare}>
    {tab.icon}
    <TabTitle>{tab.title}</TabTitle>
  </TabItem>
);

export default function App() {
  return (
    <>
      <GlobalStyle />
      <Screen>
        <TabStrip>
          <TabMenuButton><TabMenuIcon /></TabMenuButton>
          {sleepingTabs.map((tab, i) => <Tab key={i} tab={{ ...tab, asleep: true }} />)}
          {awakeTabs.map((tab, i) => <Tab key={i} tab={tab} />)}
          <ActiveTab>
            <PageIcon />
            <svg width="12" height="12" viewBox="0 0 12 12" {...stroke} strokeWidth="1.5">
              <path d="M1 1 11 11M11 1 1 11" />
            </svg>
          </ActiveTab>
          <Tab tab={{ title: "My T", icon: <PageIcon />, w: 74 }} bare />
          <Tab tab={{ title: "how", icon: <BingIcon />, w: 75 }} />
          <EndDivider />
          <NewTab>
            <svg width="18" height="18" viewBox="0 0 18 18" {...stroke} strokeWidth="1.5">
              <path d="M9 1V17M1 9H17" />
            </svg>
          </NewTab>
          <WindowButtons>
            <svg width="15" height="15" viewBox="0 0 15 15"><path d="M1 7.5H14" stroke="#000" strokeWidth="1.2" /></svg>
            <svg width="15" height="15" viewBox="0 0 15 15" {...stroke} strokeWidth="1.2">
              <rect x="1" y="3.5" width="10.5" height="10.5" rx="1.5" />
              <path d="M3.5 1H12Q14 1 14 3V11.5" />
            </svg>
            <svg width="14" height="14" viewBox="0 0 14 14" {...stroke} strokeWidth="1.1"><path d="M.7.7 13.3 13.3M13.3.7.7 13.3" /></svg>
          </WindowButtons>
        </TabStrip>

        <Toolbar>
          <NavButtons>
            <ArrowIcon />
            <ArrowIcon flip />
            <ReloadIcon />
          </NavButtons>
          <AddressBar>
            <InfoIcon />
            <Scheme>File</Scheme>
            <Divider />
            <Address>C:/Users/mawel/OneDrive/Desktop/TeamProfile_Generator/test.html</Address>
            <AddFavoriteIcon />
          </AddressBar>
          <ToolbarActions>
            <Action $gap={33}><FavoritesIcon /></Action>
            <Action $gap={33}><CollectionsIcon /></Action>
            <Action $gap={34}><ProfileIcon /></Action>
            <MoreIcon />
          </ToolbarActions>
        </Toolbar>

        <Page>
          <Jumbotron>
            <PageTitle $track={-0.6}>My Team</PageTitle>
          </Jumbotron>
          <Team>
            {team.map((m) => (
              <Card key={m.name} $w={m.width}>
                <CardHeader>
                  <MemberName $track={m.nameTrack}>{m.name}</MemberName>
                  <MemberRole $track={m.roleTrack} $gap={m.gap} $iconWidth={m.iconWidth}>
                    {m.icon}
                    {m.role}
                  </MemberRole>
                </CardHeader>
                <Facts $track={m.track}>
                  {m.facts.map(([label, link]) => (
                    <Fact key={label}>
                      {label}
                      {link && <Link>{link}</Link>}
                    </Fact>
                  ))}
                </Facts>
              </Card>
            ))}
          </Team>
        </Page>

        <Taskbar>
          {apps.map((app, i) => (
            <AppSlot key={i} $state={app.state}>
              {app.state === "active" ? <ActiveIconBox>{app.icon}</ActiveIconBox> : <IconBox>{app.icon}</IconBox>}
            </AppSlot>
          ))}
          <Tray>
            <TrayItem $gap={11}><ChevronUpIcon /></TrayItem>
            <TrayItem $gap={15}><CloudIcon /></TrayItem>
            <TrayItem $gap={10}><WifiIcon /></TrayItem>
            <TrayItem $gap={9}><SpeakerIcon /></TrayItem>
            <TrayItem $gap={2}><BatteryIcon /></TrayItem>
            <Clock>
              5:37 PM
              <br />
              3/2/2022
            </Clock>
          </Tray>
        </Taskbar>
      </Screen>
    </>
  );
}
